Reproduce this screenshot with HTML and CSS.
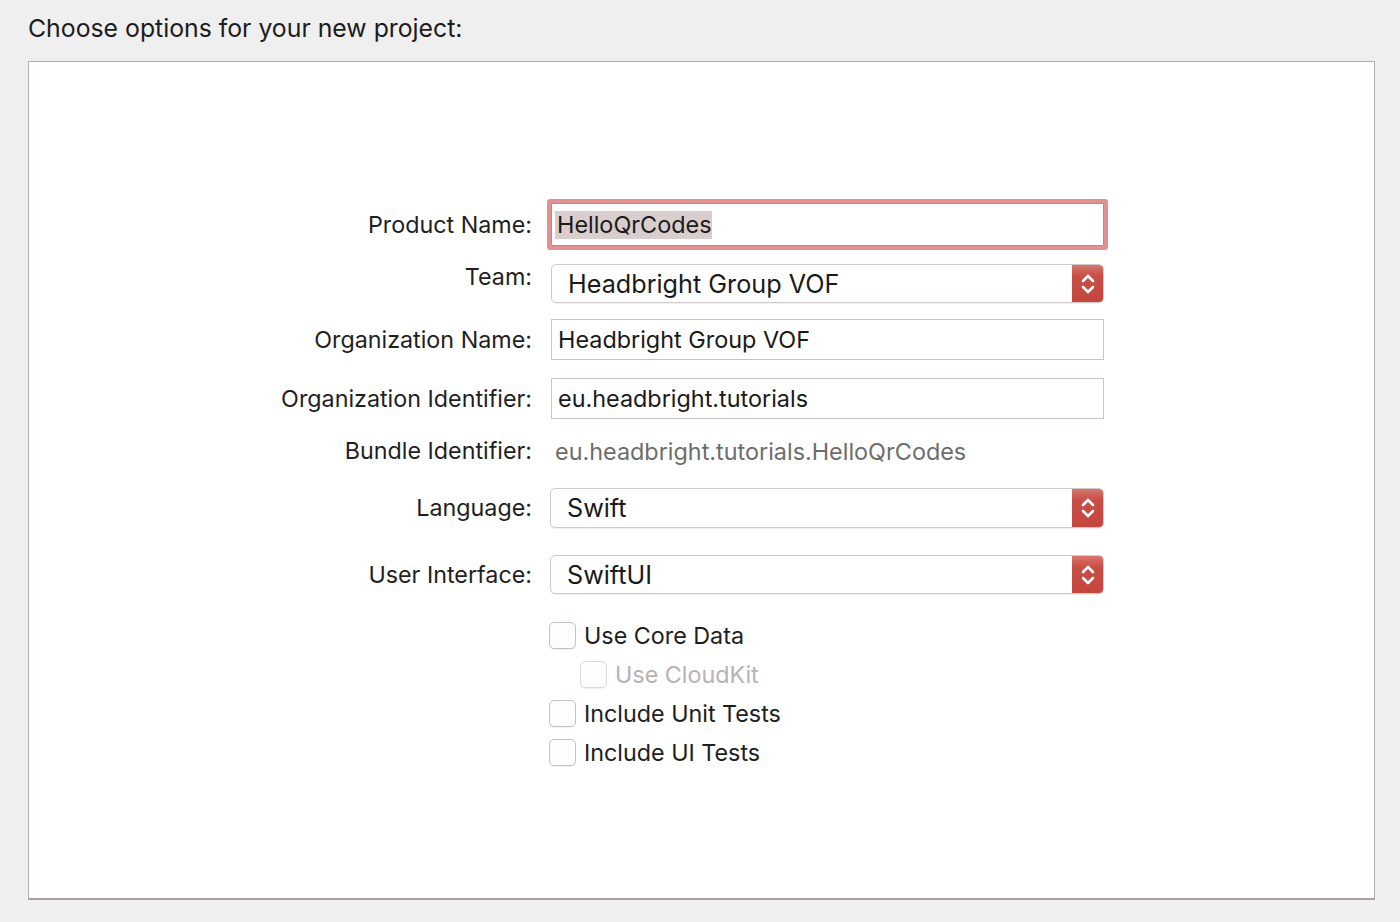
FILE: index.html
```html
<!DOCTYPE html>
<html>
<head>
<meta charset="utf-8">
<link rel="stylesheet" href="styles.css">
</head>
<body>
<h1 class="title">Choose options for your new project:</h1>
<div class="panel">
  <div class="form">
    <div class="row row-product">
      <div class="label">Product Name:</div>
      <div class="field field-focus"><span class="sel">HelloQrCodes</span></div>
    </div>
    <div class="row row-team">
      <div class="label label-up">Team:</div>
      <div class="popup">
        <span class="popup-text">Headbright Group VOF</span>
        <span class="stepper"><svg width="16" height="24" viewBox="0 0 16 24"><path d="M3 9 L8 4 L13 9 M3 15 L8 20 L13 15" fill="none" stroke="#fff" stroke-width="2.6" stroke-linecap="round" stroke-linejoin="round"/></svg></span>
      </div>
    </div>
    <div class="row row-field">
      <div class="label">Organization Name:</div>
      <div class="field">Headbright Group VOF</div>
    </div>
    <div class="row row-field">
      <div class="label">Organization Identifier:</div>
      <div class="field">eu.headbright.tutorials</div>
    </div>
    <div class="row row-bundle">
      <div class="label">Bundle Identifier:</div>
      <div class="static">eu.headbright.tutorials.HelloQrCodes</div>
    </div>
    <div class="row row-lang">
      <div class="label">Language:</div>
      <div class="popup popup-wide">
        <span class="popup-text">Swift</span>
        <span class="stepper"><svg width="16" height="24" viewBox="0 0 16 24"><path d="M3 9 L8 4 L13 9 M3 15 L8 20 L13 15" fill="none" stroke="#fff" stroke-width="2.6" stroke-linecap="round" stroke-linejoin="round"/></svg></span>
      </div>
    </div>
    <div class="row row-ui">
      <div class="label">User Interface:</div>
      <div class="popup popup-wide">
        <span class="popup-text">SwiftUI</span>
        <span class="stepper"><svg width="16" height="24" viewBox="0 0 16 24"><path d="M3 9 L8 4 L13 9 M3 15 L8 20 L13 15" fill="none" stroke="#fff" stroke-width="2.6" stroke-linecap="round" stroke-linejoin="round"/></svg></span>
      </div>
    </div>
    <div class="checks">
      <label class="check"><span class="box"></span><span>Use Core Data</span></label>
      <label class="check check-sub disabled"><span class="box"></span><span>Use CloudKit</span></label>
      <label class="check"><span class="box"></span><span>Include Unit Tests</span></label>
      <label class="check"><span class="box"></span><span>Include UI Tests</span></label>
    </div>
  </div>
</div>
</body>
</html>
```

FILE: styles.css
```css
* { box-sizing: border-box; }
html, body { margin: 0; padding: 0; }
body {
  background: #efefef;
  font-family: Inter, "Noto Sans", "Liberation Sans", sans-serif;
  color: #1e1e1e;
  width: 1400px;
  height: 922px;
  overflow: hidden;
}
.title {
  margin: 0;
  padding: 13px 0 0 28px;
  height: 61px;
  font-size: 24.8px;
  font-weight: 400;
  line-height: 30px;
  color: #1c1c1c;
}
.panel {
  margin-left: 28px;
  width: 1347px;
  height: 839px;
  background: #fff;
  border: 1px solid #b5adb0;
  border-bottom: 2px solid #a9a1a4;
  padding-top: 141px;
}
.form { display: flex; flex-direction: column; }
.row {
  display: flex;
  align-items: center;
}
.label {
  width: 503px;
  text-align: right;
  font-size: 23.3px;
  line-height: 28px;
  color: #1f1f1f;
  margin-right: 19px;
  flex: none;
}
.label-up { padding-bottom: 13px; }
.row-product { height: 43px; }
.row-team { height: 39px; margin-top: 18px; }
.row-field { height: 41px; margin-top: 16px; }
.row-field + .row-field { margin-top: 18px; }
.row-bundle { height: 38px; margin-top: 13px; }
.row-lang { height: 40px; margin-top: 18px; }
.row-ui { height: 39px; margin-top: 27px; }
.field {
  width: 553px;
  height: 100%;
  border: 1px solid #cbc3c6;
  background: #fff;
  font-size: 23.4px;
  line-height: 28px;
  padding: 5px 6px;
  display: flex;
  align-items: center;
  color: #1a1a1a;
}
.field-focus {
  border: 1px solid #d9797b;
  box-shadow: 0 0 0 4px #e39092;
  border-radius: 1px;
}
.sel {
  background: #dacdcd;
  padding: 0 1px 0 2px;
  margin-left: -3px;
}
.static {
  font-size: 23.4px;
  color: #6d6d6d;
  margin-left: 4px;
}
.popup {
  width: 553px;
  height: 100%;
  border: 1px solid #d2cacd;
  border-radius: 5px;
  background: #fff;
  display: flex;
  align-items: center;
  box-shadow: 0 1px 0 rgba(0,0,0,0.06);
  overflow: hidden;
}
.popup-wide { width: 554px; margin-left: -1px; }
.popup-text {
  flex: 1;
  font-size: 25.2px;
  padding-left: 16px;
  color: #1a1a1a;
}
.stepper {
  width: 32px;
  height: 100%;
  background: linear-gradient(#d67770 0, #cf5f57 6px, #c84d44 12px, #c4473f);
  display: flex;
  align-items: center;
  justify-content: center;
  margin-right: -1px;
}
.checks {
  display: flex;
  flex-direction: column;
  gap: 12px;
  margin-top: 28px;
  margin-left: 520px;
}
.check {
  display: flex;
  align-items: center;
  height: 27px;
  font-size: 23.3px;
  color: #1e1e1e;
  gap: 8px;
}
.box {
  width: 27px;
  height: 27px;
  border: 1px solid #c8bfc2;
  border-radius: 5px;
  background: #fdfdfd;
  box-shadow: 0 1px 0 rgba(0,0,0,0.05);
}
.check-sub { margin-left: 31px; }
.disabled { color: #b9b1b4; }
.disabled .box { border-color: #e0d9db; }
```
